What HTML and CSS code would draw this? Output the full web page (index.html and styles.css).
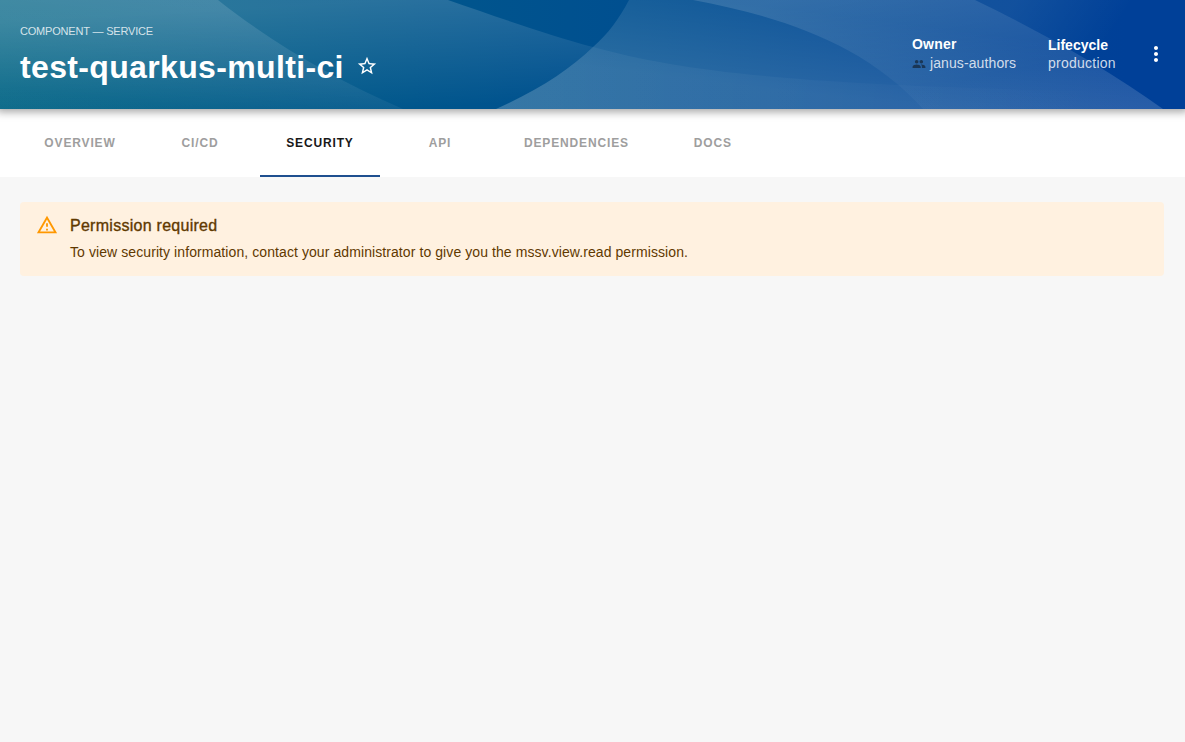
FILE: index.html
```
<!DOCTYPE html>
<html lang="en">
<head>
<meta charset="utf-8">
<title>test-quarkus-multi-ci</title>
<link rel="stylesheet" href="styles.css">
</head>
<body>
<header class="header">
  <svg class="waves" viewBox="0 0 1185 109" preserveAspectRatio="none" aria-hidden="true">
    <defs>
      <linearGradient id="w1" gradientUnits="userSpaceOnUse" x1="200" y1="0" x2="188" y2="109"><stop offset="0" stop-color="#fff" stop-opacity=".13"/><stop offset="1" stop-color="#fff" stop-opacity=".03"/></linearGradient>
      <linearGradient id="w2" gradientUnits="userSpaceOnUse" x1="400" y1="0" x2="406" y2="109"><stop offset="0" stop-color="#fff" stop-opacity=".16"/><stop offset="1" stop-color="#fff" stop-opacity="0"/></linearGradient>
      <linearGradient id="w3" gradientUnits="userSpaceOnUse" x1="710" y1="0" x2="700" y2="80"><stop offset="0" stop-color="#fff" stop-opacity=".08"/><stop offset="1" stop-color="#fff" stop-opacity=".16"/></linearGradient>
      <linearGradient id="w4" gradientUnits="userSpaceOnUse" x1="790" y1="0" x2="810" y2="109"><stop offset="0" stop-color="#fff" stop-opacity=".13"/><stop offset="1" stop-color="#fff" stop-opacity=".03"/></linearGradient>
      <linearGradient id="w5" gradientUnits="userSpaceOnUse" x1="1010" y1="10" x2="1090" y2="65"><stop offset="0" stop-color="#fff" stop-opacity=".07"/><stop offset="1" stop-color="#fff" stop-opacity="0"/></linearGradient>
      <linearGradient id="w6" gradientUnits="userSpaceOnUse" x1="500" y1="0" x2="1100" y2="0"><stop offset="0" stop-color="#fff" stop-opacity=".06"/><stop offset="1" stop-color="#fff" stop-opacity="0"/></linearGradient>
    </defs>
    <path fill="url(#w1)" d="M0 0H218C271 42 334 79 403 109H0Z"/>
    <path fill="url(#w2)" d="M0 0H448C500 18 551 36 593 47C570 69 539 90 496 109H0Z"/>
    <path fill="url(#w3)" d="M629 0C619 19 608 34 593 47C570 69 539 90 496 109H1163C1106 68 1041 32 975 0Z"/>
    <path fill="url(#w6)" d="M593 47C694 75 827 87 1140 92L1163 109H496C539 90 570 69 593 47Z"/>
    <path fill="url(#w4)" d="M693 0C779 16 864 43 923 109H1163C1106 68 1041 32 975 0Z"/>
    <path fill="url(#w5)" d="M975 0H1185V109H1163C1106 68 1041 32 975 0Z"/>
  </svg>
  <div class="heading">
    <p class="kind">COMPONENT — SERVICE</p>
    <div class="title-row">
      <h1 class="title">test-quarkus-multi-ci</h1>
      <svg class="star" viewBox="0 0 24 24"><path fill="#fff" d="M22 9.24l-7.19-.62L12 2 9.19 8.63 2 9.24l5.46 4.73L5.82 21 12 17.27 18.18 21l-1.63-7.03L22 9.24zM12 15.4l-3.76 2.27 1-4.28-3.32-2.88 4.38-.38L12 6.1l1.71 4.04 4.38.38-3.32 2.88 1 4.28L12 15.4z"/></svg>
    </div>
  </div>
  <dl class="fact owner">
    <dt>Owner</dt>
    <dd><svg class="people" viewBox="0 0 24 24"><path d="M16 11c1.66 0 2.99-1.34 2.99-3S17.66 5 16 5c-1.66 0-3 1.34-3 3s1.34 3 3 3zm-8 0c1.66 0 2.99-1.34 2.99-3S9.66 5 8 5C6.34 5 5 6.34 5 8s1.34 3 3 3zm0 2c-2.33 0-7 1.17-7 3.5V19h14v-2.5c0-2.33-4.67-3.5-7-3.5zm8 0c-.29 0-.62.02-.97.05 1.16.84 1.97 1.97 1.97 3.45V19h6v-2.5c0-2.33-4.67-3.5-7-3.5z"/></svg><span class="owner-name">janus-authors</span></dd>
  </dl>
  <dl class="fact lifecycle">
    <dt>Lifecycle</dt>
    <dd><span class="stage">production</span></dd>
  </dl>
  <svg class="more" viewBox="0 0 24 24"><path fill="#fff" d="M12 8c1.1 0 2-.9 2-2s-.9-2-2-2-2 .9-2 2 .9 2 2 2zm0 2c-1.1 0-2 .9-2 2s.9 2 2 2 2-.9 2-2-.9-2-2-2zm0 6c-1.1 0-2 .9-2 2s.9 2 2 2 2-.9 2-2-.9-2-2-2z"/></svg>
</header>
<nav class="tabs">
  <a class="tab">OVERVIEW</a>
  <a class="tab">CI/CD</a>
  <a class="tab active">SECURITY</a>
  <a class="tab">API</a>
  <a class="tab">DEPENDENCIES</a>
  <a class="tab">DOCS</a>
</nav>
<main class="content">
  <section class="alert">
    <svg class="warning" viewBox="0 0 24 24"><path fill="#ff9800" d="M12 5.99L19.53 19H4.47L12 5.99M12 2L1 21h22L12 2zm1 14h-2v2h2v-2zm0-6h-2v4h2v-4z"/></svg>
    <div>
      <h2 class="alert-title">Permission required</h2>
      <p class="alert-text">To view security information, contact your administrator to give you the mssv.view.read permission.</p>
    </div>
  </section>
</main>
</body>
</html>
```
FILE: styles.css
```
* { box-sizing: border-box; }
body { margin: 0; min-height: 742px; background: #f7f7f7; font-family: "Liberation Sans", Arial, sans-serif; }
h1, h2, p, dl, dd { margin: 0; }
svg { display: block; flex: none; }
.header {
  position: relative;
  z-index: 1;
  display: flex;
  height: 109px;
  padding: 24px 17px 0 20px;
  color: #fff;
  background: linear-gradient(90deg, #006384 0%, #00518f 48%, #004098 95%);
  box-shadow: 0 0 8px 3px rgba(20, 20, 20, .38);
}
.waves { position: absolute; inset: 0; width: 100%; height: 109px; }
.heading, .fact, .more { position: relative; }
.heading { flex: 1; }
.kind { font-size: 11px; line-height: 14px; letter-spacing: -.19px; color: rgba(255, 255, 255, .8); white-space: nowrap; }
.title-row { display: flex; align-items: center; gap: 12px; margin-top: 9px; }
.title { font-size: 32px; line-height: 40px; font-weight: 700; letter-spacing: .35px; white-space: nowrap; }
.star { width: 22px; height: 22px; margin-top: -3px; }
.fact { font-size: 14px; line-height: 19px; }
.fact dt { font-weight: 700; }
.fact dd { display: flex; align-items: center; color: rgba(255, 255, 255, .8); white-space: nowrap; }
.owner { width: 136px; padding-top: 11px; }
.owner dt { letter-spacing: .2px; }
.owner-name { letter-spacing: .1px; }
.stage { letter-spacing: .25px; }
.lifecycle { width: 96px; padding-top: 12px; }
.lifecycle dd { margin-top: -1px; }
.people { width: 14px; height: 14px; margin-right: 4px; fill: #1a3757; }
.more { width: 24px; height: 24px; margin-top: 18px; }
.tabs { display: flex; height: 68px; padding-left: 20px; background: #fff; }
.tab {
  display: flex;
  justify-content: center;
  min-width: 120px;
  padding: 26px 24px 0;
  font-size: 12px;
  line-height: 16px;
  font-weight: 700;
  letter-spacing: .85px;
  color: #9e9e9e;
}
.tab.active { color: #181818; border-bottom: 2px solid #1f4f8f; }
.content { padding: 25px 21px 0 20px; }
.alert { display: flex; gap: 12px; height: 74px; padding: 13px 16px 0; border-radius: 4px; background: #fff1e0; color: #5f3900; }
.warning { width: 22px; height: 22px; margin-top: -1px; }
.alert-title { font-size: 16px; line-height: 22px; font-weight: 400; letter-spacing: .27px; -webkit-text-stroke: .35px #5f3900; }
.alert-text { margin-top: 5px; font-size: 14px; line-height: 20px; letter-spacing: .083px; }
```
